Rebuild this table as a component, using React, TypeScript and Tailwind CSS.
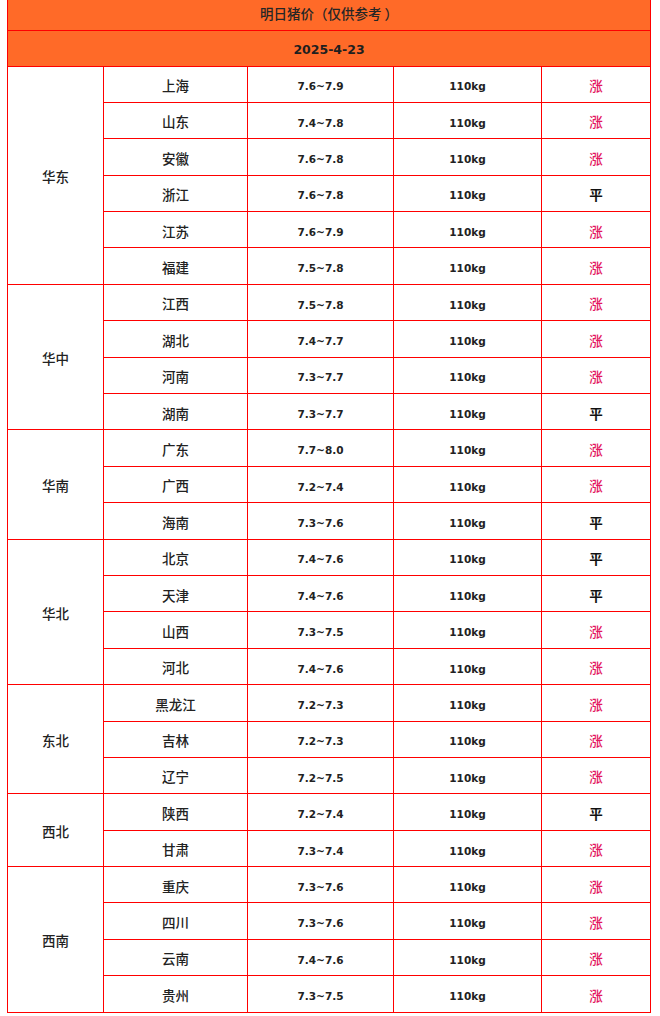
import React from 'react';

type Row = { city: string; range: string; trend: '涨' | '平' };

const regions: { name: string; rows: Row[] }[] = [
    {
        name: '华东',
        rows: [
            { city: '上海', range: '7.6~7.9', trend: '涨' },
            { city: '山东', range: '7.4~7.8', trend: '涨' },
            { city: '安徽', range: '7.6~7.8', trend: '涨' },
            { city: '浙江', range: '7.6~7.8', trend: '平' },
            { city: '江苏', range: '7.6~7.9', trend: '涨' },
            { city: '福建', range: '7.5~7.8', trend: '涨' },
        ],
    },
    {
        name: '华中',
        rows: [
            { city: '江西', range: '7.5~7.8', trend: '涨' },
            { city: '湖北', range: '7.4~7.7', trend: '涨' },
            { city: '河南', range: '7.3~7.7', trend: '涨' },
            { city: '湖南', range: '7.3~7.7', trend: '平' },
        ],
    },
    {
        name: '华南',
        rows: [
            { city: '广东', range: '7.7~8.0', trend: '涨' },
            { city: '广西', range: '7.2~7.4', trend: '涨' },
            { city: '海南', range: '7.3~7.6', trend: '平' },
        ],
    },
    {
        name: '华北',
        rows: [
            { city: '北京', range: '7.4~7.6', trend: '平' },
            { city: '天津', range: '7.4~7.6', trend: '平' },
            { city: '山西', range: '7.3~7.5', trend: '涨' },
            { city: '河北', range: '7.4~7.6', trend: '涨' },
        ],
    },
    {
        name: '东北',
        rows: [
            { city: '黑龙江', range: '7.2~7.3', trend: '涨' },
            { city: '吉林', range: '7.2~7.3', trend: '涨' },
            { city: '辽宁', range: '7.2~7.5', trend: '涨' },
        ],
    },
    {
        name: '西北',
        rows: [
            { city: '陕西', range: '7.2~7.4', trend: '平' },
            { city: '甘肃', range: '7.3~7.4', trend: '涨' },
        ],
    },
    {
        name: '西南',
        rows: [
            { city: '重庆', range: '7.3~7.6', trend: '涨' },
            { city: '四川', range: '7.3~7.6', trend: '涨' },
            { city: '云南', range: '7.4~7.6', trend: '涨' },
            { city: '贵州', range: '7.3~7.5', trend: '涨' },
        ],
    },
];

const cjk = "font-['Noto_Sans_CJK_SC',sans-serif] font-medium";
const num = "font-['DejaVu_Sans','Noto_Sans_CJK_SC',sans-serif] font-bold";
const cell = 'border border-[#ff0000] text-center align-middle p-0';

const App: React.FC = () => {
    return (
        <div className="bg-white w-[660px] min-h-[1016px] pl-[7px]">
            <table className="border-collapse table-fixed w-[643px] text-[#222]">
                <colgroup>
                    <col className="w-[96px]" />
                    <col className="w-[144px]" />
                    <col className="w-[146px]" />
                    <col className="w-[148px]" />
                    <col className="w-[109px]" />
                </colgroup>
                <tbody>
                    <tr className="h-[30px] bg-[#ff6a28]">
                        <td colSpan={5} className={`${cell} border-t-0 ${cjk} text-[13.5px] text-[#262626] pb-[3px]`}>
                            明日猪价（仅供参考 ）
                        </td>
                    </tr>
                    <tr className="h-[36px] bg-[#ff6a28]">
                        <td colSpan={5} className={`${cell} ${num} text-[12.5px] text-[#1f1f1f] pt-[4px]`}>
                            2025-4-23
                        </td>
                    </tr>
                    {regions.map(region =>
                        region.rows.map((r, i) => (
                            <tr key={r.city} className="h-[36.4px]">
                                {i === 0 && (
                                    <td rowSpan={region.rows.length} className={`${cell} ${cjk} text-[13.5px] pt-[2px]`}>
                                        {region.name}
                                    </td>
                                )}
                                <td className={`${cell} ${cjk} text-[13.5px] pt-[2px]`}>{r.city}</td>
                                <td className={`${cell} ${num} text-[10.5px] pt-[6px]`}>{r.range}</td>
                                <td className={`${cell} ${num} text-[10.5px] pt-[6px]`}>110kg</td>
                                <td className={`${cell} font-['Noto_Sans_CJK_SC',sans-serif] text-[13.5px] pt-[2px] ${r.trend === '涨' ? 'text-[#e3175f] font-medium' : 'text-[#111] font-bold'}`}>
                                    {r.trend}
                                </td>
                            </tr>
                        ))
                    )}
                </tbody>
            </table>
        </div>
    );
};

export default App;
